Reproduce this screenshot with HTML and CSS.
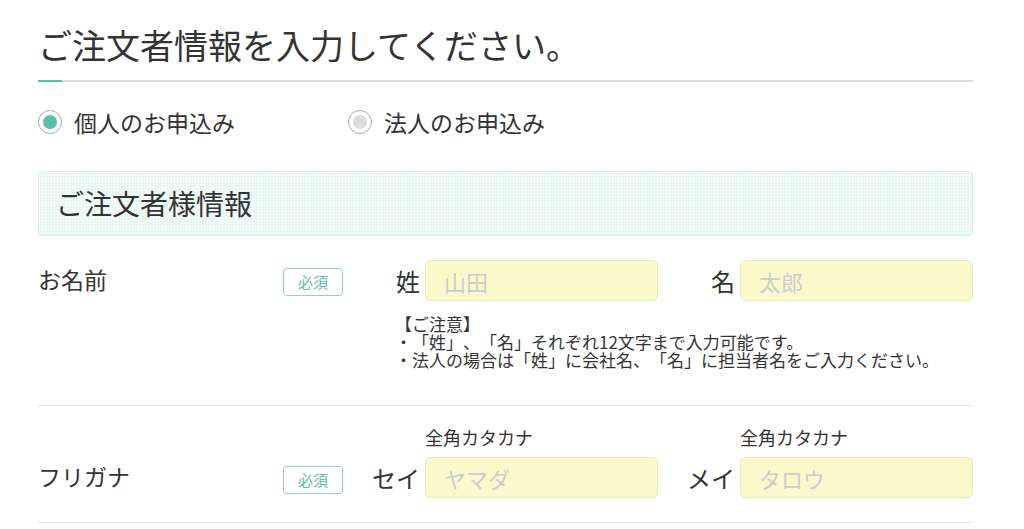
FILE: index.html
```html
<!DOCTYPE html>
<html lang="ja">
<head>
    <meta charset="UTF-8">
    <title>ご注文者情報</title>
    <link rel="stylesheet" href="styles.css">
</head>
<body>
    <div class="container">
        <h1 class="page-title">ご注文者情報を入力してください。</h1>

        <div class="order-type">
            <label class="radio"><span class="radio-mark checked"></span>個人のお申込み</label>
            <label class="radio"><span class="radio-mark"></span>法人のお申込み</label>
        </div>

        <h2 class="section-head">ご注文者様情報</h2>

        <div class="form-row row-name">
            <div class="row-label">お名前</div>
            <div class="badge">必須</div>
            <div class="fields">
                <div class="field">
                    <span class="field-label">姓</span>
                    <input type="text" placeholder="山田">
                </div>
                <div class="field">
                    <span class="field-label">名</span>
                    <input type="text" placeholder="太郎">
                </div>
                <div class="notes">
                    【ご注意】<br>
                    ・「姓」、「名」それぞれ12文字まで入力可能です。<br>
                    ・法人の場合は「姓」に会社名、「名」に担当者名をご入力ください。
                </div>
            </div>
        </div>

        <div class="form-row row-kana">
            <div class="row-label">フリガナ</div>
            <div class="badge">必須</div>
            <div class="fields">
                <div class="field">
                    <span class="field-label">セイ</span>
                    <div class="input-wrap">
                        <span class="hint">全角カタカナ</span>
                        <input type="text" placeholder="ヤマダ">
                    </div>
                </div>
                <div class="field">
                    <span class="field-label">メイ</span>
                    <div class="input-wrap">
                        <span class="hint">全角カタカナ</span>
                        <input type="text" placeholder="タロウ">
                    </div>
                </div>
            </div>
        </div>
    </div>
</body>
</html>
```

FILE: styles.css
```css
body {
    margin: 0;
    background: #fff;
    color: #333;
    font-family: "Noto Sans CJK JP", "Noto Sans", sans-serif;
    text-spacing-trim: space-all;
}
.container {
    width: 935px;
    margin-left: 38px;
}
.page-title {
    margin: 0;
    padding-top: 22px;
    height: 82px;
    box-sizing: border-box;
    font-size: 34px;
    font-weight: normal;
    line-height: 46px;
    position: relative;
    border-bottom: 2px solid #ddd;
}
.page-title::after {
    content: "";
    position: absolute;
    left: 0;
    bottom: -2px;
    width: 24px;
    height: 2px;
    background: #5bbfa9;
}
.order-type {
    display: flex;
    padding-top: 26px;
    height: 61px;
    box-sizing: border-box;
}
.radio {
    display: flex;
    align-items: center;
    width: 310px;
    height: 28px;
    font-size: 23px;
    line-height: 28px;
}
.radio-mark {
    width: 22px;
    height: 22px;
    border: 1px solid #aaa;
    border-radius: 50%;
    margin-right: 12px;
    position: relative;
    background: #fff;
}
.radio-mark::after {
    content: "";
    position: absolute;
    left: 4px;
    top: 4px;
    width: 14px;
    height: 14px;
    border-radius: 50%;
    background: #ddd;
}
.radio-mark.checked::after {
    background: #5bbfa9;
}
.section-head {
    margin: 28px 0 0;
    height: 65px;
    box-sizing: border-box;
    padding-left: 17px;
    font-size: 28px;
    font-weight: normal;
    line-height: 62px;
    border: 1px solid #d3efe7;
    border-radius: 4px;
    background-color: #e6f7f3;
    background-image:
        linear-gradient(90deg, rgba(255, 255, 255, 0.45) 1px, transparent 1px),
        linear-gradient(rgba(255, 255, 255, 0.45) 1px, transparent 1px);
    background-size: 3px 3px;
}
.form-row {
    display: grid;
    grid-template-columns: 245px 60px 630px;
    align-items: start;
    border-bottom: 1px solid #e3e3e3;
}
.row-name {
    padding: 24px 0 36px;
}
.row-kana {
    padding: 21px 0 24px;
}
.row-label {
    font-size: 23px;
    line-height: 39px;
}
.row-kana .row-label {
    margin-top: 30px;
}
.row-kana .badge {
    margin-top: 39px;
}
.badge {
    margin-top: 8px;
    height: 28px;
    box-sizing: border-box;
    border: 1px solid #8bd3c3;
    border-radius: 4px;
    color: #5bbfa9;
    font-size: 15px;
    line-height: 26px;
    text-align: center;
}
.fields {
    display: flex;
    flex-wrap: wrap;
}
.field {
    width: 315px;
    display: flex;
    justify-content: flex-end;
    align-items: flex-end;
}
.field-label {
    font-size: 24px;
    line-height: 41px;
    margin-right: 5px;
}
.input-wrap {
    display: flex;
    flex-direction: column;
}
.hint {
    font-size: 18px;
    line-height: 20px;
    margin-bottom: 10px;
}
input {
    width: 233px;
    height: 41px;
    box-sizing: border-box;
    padding: 0 18px;
    border: 1px solid #ecebb8;
    border-radius: 5px;
    background: #fbf9cc;
    font-family: inherit;
    font-size: 22px;
    color: #333;
}
input::placeholder {
    color: #ccc;
}
.notes {
    width: 100%;
    padding: 14px 0 0 52px;
    font-size: 17px;
    line-height: 18px;
}
```
